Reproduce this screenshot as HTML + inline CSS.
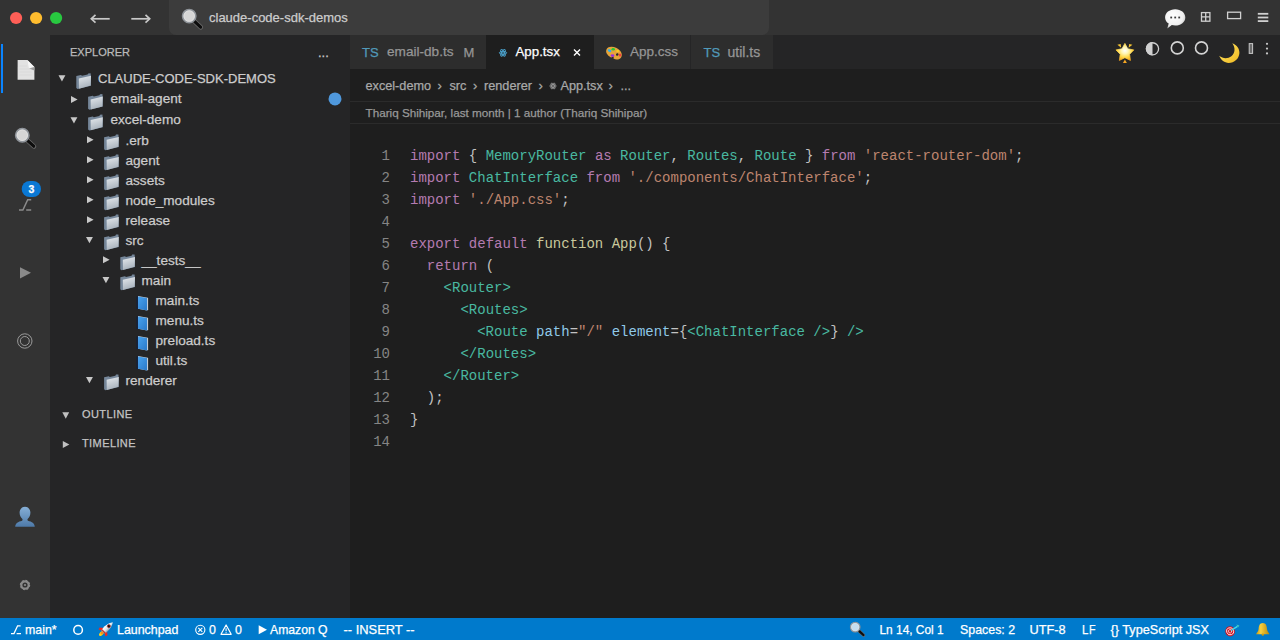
<!DOCTYPE html>
<html><head><meta charset="utf-8">
<style>
*{margin:0;padding:0;box-sizing:border-box}
html,body{width:1280px;height:640px;overflow:hidden;background:#1e1e1e}
body{position:relative;font-family:"Liberation Sans",sans-serif;color:#cccccc}
.a{position:absolute}
.t{position:absolute;white-space:pre;line-height:1;-webkit-text-stroke:0.25px currentColor}
svg{position:absolute;overflow:visible}
.code{position:absolute;left:410px;top:145px;font-family:"Liberation Mono",monospace;font-size:14px;line-height:22px;color:#d4d4d4;white-space:pre;opacity:0.9}
.ln{position:absolute;left:360px;width:30px;top:145px;font-family:"Liberation Mono",monospace;font-size:14px;line-height:22px;color:#858585;text-align:right;white-space:pre}
.k{color:#c586c0}.c{color:#4ec9b0}.s{color:#ce9178}.f{color:#dcdcaa}.v{color:#9cdcfe}
</style></head><body>
<div class="a" style="left:0;top:0;width:1280px;height:35px;background:#333333"></div>
<div class="a" style="left:169px;top:-6px;width:600px;height:40.5px;background:#3c3c3c;border-radius:7px"></div>
<div class="a" style="left:0;top:35px;width:50px;height:583px;background:#333333"></div>
<div class="a" style="left:1px;top:44px;width:2px;height:49px;background:#0a84ff"></div>
<div class="a" style="left:50px;top:35px;width:300px;height:583px;background:#252526"></div>
<div class="a" style="left:350px;top:35px;width:930px;height:34px;background:#252526"></div>
<div class="a" style="left:350px;top:35px;width:136px;height:34px;background:#2d2d2d"></div>
<div class="a" style="left:486px;top:35px;width:108px;height:34px;background:#1e1e1e"></div>
<div class="a" style="left:594px;top:35px;width:96px;height:34px;background:#2d2d2d"></div>
<div class="a" style="left:691px;top:35px;width:82px;height:34px;background:#2d2d2d"></div>
<div class="a" style="left:350px;top:101px;width:930px;height:1px;background:#2b2b2b"></div>
<div class="a" style="left:350px;top:123px;width:930px;height:1px;background:#2b2b2b"></div>
<div class="a" style="left:0;top:618px;width:1280px;height:22px;background:#007acc"></div>
<div class="t" style="left:209px;top:10.90px;font-size:13px;color:#cccccc;">claude-code-sdk-demos</div>
<div class="t" style="left:70px;top:46.99px;font-size:11px;color:#bbbbbb;">EXPLORER</div>
<div class="t" style="left:318px;top:46.10px;font-size:13px;color:#cccccc;">...</div>
<div class="t" style="left:98px;top:72.20px;font-size:13px;color:#cccccc;">CLAUDE-CODE-SDK-DEMOS</div>
<div class="t" style="left:110.5px;top:92.49px;font-size:13.6px;color:#cccccc;">email-agent</div>
<div class="t" style="left:110.5px;top:113.29px;font-size:13.6px;color:#cccccc;">excel-demo</div>
<div class="t" style="left:125.5px;top:133.69px;font-size:13.6px;color:#cccccc;">.erb</div>
<div class="t" style="left:125.5px;top:153.69px;font-size:13.6px;color:#cccccc;">agent</div>
<div class="t" style="left:125.5px;top:173.69px;font-size:13.6px;color:#cccccc;">assets</div>
<div class="t" style="left:125.5px;top:193.69px;font-size:13.6px;color:#cccccc;">node_modules</div>
<div class="t" style="left:125.5px;top:213.69px;font-size:13.6px;color:#cccccc;">release</div>
<div class="t" style="left:125.5px;top:233.69px;font-size:13.6px;color:#cccccc;">src</div>
<div class="t" style="left:141.5px;top:253.69px;font-size:13.6px;color:#cccccc;">__tests__</div>
<div class="t" style="left:141.5px;top:273.69px;font-size:13.6px;color:#cccccc;">main</div>
<div class="t" style="left:155.5px;top:293.69px;font-size:13.6px;color:#cccccc;">main.ts</div>
<div class="t" style="left:155.5px;top:313.69px;font-size:13.6px;color:#cccccc;">menu.ts</div>
<div class="t" style="left:155.5px;top:333.69px;font-size:13.6px;color:#cccccc;">preload.ts</div>
<div class="t" style="left:155.5px;top:353.69px;font-size:13.6px;color:#cccccc;">util.ts</div>
<div class="t" style="left:125.5px;top:373.69px;font-size:13.6px;color:#cccccc;">renderer</div>
<div class="t" style="left:82px;top:409.19px;font-size:11px;color:#c4c4c4;letter-spacing:0.4px">OUTLINE</div>
<div class="t" style="left:82px;top:437.99px;font-size:11px;color:#c4c4c4;letter-spacing:0.4px">TIMELINE</div>
<div class="t" style="left:362px;top:45.50px;font-size:13px;color:#519aba;">TS</div>
<div class="t" style="left:387px;top:44.99px;font-size:13.6px;color:#969696;">email-db.ts</div>
<div class="t" style="left:463.5px;top:45.50px;font-size:13px;color:#969696;">M</div>
<div class="t" style="left:515.5px;top:45.24px;font-size:13.3px;color:#ffffff;">App.tsx</div>
<div class="t" style="left:630px;top:45.07px;font-size:13.5px;color:#969696;">App.css</div>
<div class="t" style="left:703.5px;top:45.50px;font-size:13px;color:#519aba;">TS</div>
<div class="t" style="left:727.5px;top:44.65px;font-size:14px;color:#969696;">util.ts</div>
<div class="t" style="left:365.5px;top:79.75px;font-size:12.7px;color:#a9a9a9;">excel-demo</div>
<div class="t" style="left:449.5px;top:79.75px;font-size:12.7px;color:#a9a9a9;">src</div>
<div class="t" style="left:484px;top:79.75px;font-size:12.7px;color:#a9a9a9;">renderer</div>
<div class="t" style="left:560.5px;top:79.75px;font-size:12.7px;color:#a9a9a9;">App.tsx</div>
<div class="t" style="left:620.5px;top:79.75px;font-size:12.7px;color:#a9a9a9;">...</div>
<div class="t" style="left:437.5px;top:79.00px;font-size:13px;color:#a9a9a9;">›</div>
<div class="t" style="left:473px;top:79.00px;font-size:13px;color:#a9a9a9;">›</div>
<div class="t" style="left:538.5px;top:79.00px;font-size:13px;color:#a9a9a9;">›</div>
<div class="t" style="left:608.5px;top:79.00px;font-size:13px;color:#a9a9a9;">›</div>
<div class="t" style="left:365.5px;top:107.00px;font-size:11.7px;color:#999999;">Thariq Shihipar, last month | 1 author (Thariq Shihipar)</div>
<div class="ln">1
2
3
4
5
6
7
8
9
10
11
12
13
14</div>
<div class="code"><span class="k">import</span> { <span class="c">MemoryRouter</span> <span class="k">as</span> <span class="c">Router</span>, <span class="c">Routes</span>, <span class="c">Route</span> } <span class="k">from</span> <span class="s">'react-router-dom'</span>;
<span class="k">import</span> <span class="c">ChatInterface</span> <span class="k">from</span> <span class="s">'./components/ChatInterface'</span>;
<span class="k">import</span> <span class="s">'./App.css'</span>;

<span class="k">export</span> <span class="k">default</span> <span class="f">function</span> <span class="f">App</span>() {
  <span class="k">return</span> (
    <span class="c">&lt;Router&gt;</span>
      <span class="c">&lt;Routes&gt;</span>
        <span class="c">&lt;Route</span> <span class="v">path</span>=<span class="s">"/"</span> <span class="v">element</span>={<span class="c">&lt;ChatInterface /&gt;</span>} <span class="c">/&gt;</span>
      <span class="c">&lt;/Routes&gt;</span>
    <span class="c">&lt;/Router&gt;</span>
  );
}
</div>
<div class="t" style="left:25px;top:624.20px;font-size:12.4px;color:#ffffff;">main*</div>
<div class="t" style="left:117px;top:624.20px;font-size:12.4px;color:#ffffff;">Launchpad</div>
<div class="t" style="left:209px;top:624.20px;font-size:12.4px;color:#ffffff;">0</div>
<div class="t" style="left:235px;top:624.20px;font-size:12.4px;color:#ffffff;">0</div>
<div class="t" style="left:270px;top:624.37px;font-size:12.2px;color:#ffffff;">Amazon Q</div>
<div class="t" style="left:343.5px;top:623.78px;font-size:12.9px;color:#ffffff;">-- INSERT --</div>
<div class="t" style="left:879.5px;top:624.63px;font-size:11.9px;color:#ffffff;">Ln 14, Col 1</div>
<div class="t" style="left:960px;top:624.20px;font-size:12.4px;color:#ffffff;">Spaces: 2</div>
<div class="t" style="left:1029.5px;top:623.91px;font-size:12.75px;color:#ffffff;">UTF-8</div>
<div class="t" style="left:1082.2px;top:622.80px;font-size:13px;color:#ffffff;transform:scaleX(0.88);transform-origin:0 0">L</div>
<div class="t" style="left:1088.8px;top:622.80px;font-size:13px;color:#ffffff;transform:scaleX(0.82);transform-origin:0 0">F</div>
<div class="t" style="left:1110.5px;top:623.95px;font-size:12.7px;color:#ffffff;">{} TypeScript JSX</div>
<svg style="left:0;top:0" width="1280" height="640" viewBox="0 0 1280 640">
<defs>
<linearGradient id="fg" x1="0" y1="0" x2="0.3" y2="1"><stop offset="0" stop-color="#e6eaee"/><stop offset="1" stop-color="#a9b3bd"/></linearGradient>
<linearGradient id="bg" x1="0" y1="0" x2="1" y2="1"><stop offset="0" stop-color="#4aa3ee"/><stop offset="1" stop-color="#2a78c8"/></linearGradient>
<linearGradient id="pg" x1="0" y1="0" x2="0" y2="1"><stop offset="0" stop-color="#86afd6"/><stop offset="1" stop-color="#4d79a8"/></linearGradient>
<linearGradient id="sg" x1="0" y1="0" x2="0" y2="1"><stop offset="0" stop-color="#fffbe0"/><stop offset="0.45" stop-color="#ffe060"/><stop offset="1" stop-color="#f39c12"/></linearGradient>
<linearGradient id="mg" x1="0" y1="0" x2="1" y2="1"><stop offset="0" stop-color="#ffe868"/><stop offset="1" stop-color="#f0b820"/></linearGradient>
<linearGradient id="bellg" x1="0" y1="0" x2="1" y2="0"><stop offset="0" stop-color="#c89a10"/><stop offset="0.35" stop-color="#f6d040"/><stop offset="1" stop-color="#b8860b"/></linearGradient>
<radialGradient id="sg2" cx="0.5" cy="0.42" r="0.62"><stop offset="0" stop-color="#ffffff"/><stop offset="0.3" stop-color="#fff7b8"/><stop offset="0.65" stop-color="#ffd84a"/><stop offset="1" stop-color="#f2a31b"/></radialGradient>
<linearGradient id="rk" x1="0" y1="0" x2="0" y2="1"><stop offset="0" stop-color="#ffffff"/><stop offset="0.6" stop-color="#dde3e8"/><stop offset="1" stop-color="#8898a8"/></linearGradient>
<radialGradient id="bub" cx="0.4" cy="0.35" r="0.7"><stop offset="0" stop-color="#ffffff"/><stop offset="0.7" stop-color="#f0f0f0"/><stop offset="1" stop-color="#bdbdbd"/></radialGradient>
</defs>
<circle cx="16.1" cy="18" r="6.1" fill="#ff5f57"/><circle cx="36.1" cy="18" r="6.1" fill="#febc2e"/><circle cx="56.1" cy="18" r="6.1" fill="#28c840"/>
<g stroke="#c8c8c8" stroke-width="1.7" fill="none" stroke-linecap="butt"><path d="M91.5,18.8 H109.7"/><path d="M95.5,14.9 L91.3,18.8 L95.5,22.7"/><path d="M131.3,18.8 H149.5"/><path d="M145.5,14.9 L149.7,18.8 L145.5,22.7"/></g>
<g transform="translate(189.2,16.1) scale(1.0)">
<line x1="5.2" y1="5.2" x2="11.6" y2="11.2" stroke="#6b6b6b" stroke-width="4.6" stroke-linecap="round"/>
<line x1="5.6" y1="5.6" x2="11.4" y2="11" stroke="#0d0d0d" stroke-width="3.2" stroke-linecap="round"/>
<circle cx="0" cy="0" r="6.6" fill="#d6d6d6" stroke="#8f949a" stroke-width="1.7"/>
<circle cx="0" cy="0" r="5.3" fill="none" stroke="#e8e8e8" stroke-width="0.6"/>
</g>
<path d="M1175.2,9.2 C1181,9.2 1185.3,12.8 1185.3,17.4 C1185.3,22 1181,25.6 1175.2,25.6 C1174,25.6 1172.8,25.4 1171.8,25.1 L1167.3,28.6 L1168.7,23.6 C1166.4,22.1 1165.1,19.9 1165.1,17.4 C1165.1,12.8 1169.4,9.2 1175.2,9.2 Z" fill="url(#bub)"/>
<g fill="#3a3a3a"><rect x="1170.3" y="16.6" width="1.8" height="1.8"/><rect x="1174.3" y="16.6" width="1.8" height="1.8"/><rect x="1178.3" y="16.6" width="1.8" height="1.8"/></g>
<g fill="none" stroke="#d0d0d0" stroke-width="1.3"><rect x="1201.5" y="12.6" width="8.4" height="8.6"/><path d="M1205.7,12.6 V21.2 M1201.5,16.9 H1209.9"/><rect x="1227.6" y="12.2" width="13" height="6.4"/></g>
<g fill="#d0d0d0"><rect x="1257.8" y="12.9" width="10.5" height="1.8"/><rect x="1257.8" y="16.6" width="10.5" height="1.8"/><rect x="1257.8" y="20.2" width="10.5" height="1.8"/></g>
<path d="M17.6,60 H27.4 L34.4,67 V79.8 H17.6 Z" fill="#e2e2e2"/><path d="M27.4,60 L34.4,67 L29,68.6 Z" fill="#f6f6f6"/><path d="M29,68.6 L34.4,67 L34.4,70.5 Z" fill="#9c9c9c"/>
<g stroke="#d0d0d0" stroke-width="0.5"><path d="M19.5,66 H27 M19.5,69 H31.5 M19.5,72 H31.5 M19.5,75 H31.5"/></g>
<g transform="translate(22.3,135.2) scale(1.0)">
<line x1="5.2" y1="5.2" x2="11.6" y2="11.2" stroke="#6b6b6b" stroke-width="4.6" stroke-linecap="round"/>
<line x1="5.6" y1="5.6" x2="11.4" y2="11" stroke="#0d0d0d" stroke-width="3.2" stroke-linecap="round"/>
<circle cx="0" cy="0" r="6.6" fill="#d6d6d6" stroke="#8f949a" stroke-width="1.7"/>
<circle cx="0" cy="0" r="5.3" fill="none" stroke="#e8e8e8" stroke-width="0.6"/>
</g>
<rect x="21.7" y="181" width="19.3" height="16" rx="8" fill="#0a78d4"/>
<g fill="none" stroke="#8c8c8c" stroke-width="1.5"><path d="M19,210.1 H22.9 L27.7,199.75 H31.2 M26.2,210.1 H31.2"/></g>
<path d="M20,267.2 L31,272.8 L20,278.4 Z" fill="#8a8a8a"/>
<g fill="none" stroke="#9a9a9a" stroke-width="1"><circle cx="24.8" cy="341" r="7.2"/><circle cx="24.8" cy="341" r="4.5"/></g>
<path d="M15.2,526.8 C15.5,523.3 18,521.8 22.2,520.8 L22.6,519.2 C20.6,517.8 19.6,515.3 19.6,512.6 C19.6,509.2 22,506.8 25,506.8 C28,506.8 30.4,509.2 30.4,512.6 C30.4,515.3 29.4,517.8 27.4,519.2 L27.8,520.8 C32,521.8 34.5,523.3 34.8,526.8 Z" fill="url(#pg)"/>
<g transform="translate(25,585)"><circle r="3.7" fill="none" stroke="#8a8a8a" stroke-width="2.2"/><circle r="4.4" fill="none" stroke="#8a8a8a" stroke-width="1.6" stroke-dasharray="1.75 1.7"/><circle r="1.1" fill="#8a8a8a"/></g>
<path d="M58.5,75.2 L65.4,75.2 L61.95,81.60000000000001 Z" fill="#c8c8c8"/>
<g transform="translate(76,73.2)">
<path d="M0.3,2.8 L5,1.8 L6,2.6 L11.6,1.3 L12.2,0.2 L14.6,0 L15,4.5 L15,12.6 L1.6,15.8 L0.3,14.8 Z" fill="#76879a"/>
<path d="M2.8,5.4 L15,2.6 L14.6,12.4 L3,15.6 Z" fill="url(#fg)"/>
</g>
<path d="M71,96 L77.6,99.5 L71,103 Z" fill="#c8c8c8"/>
<g transform="translate(87.8,94)">
<path d="M0.3,2.8 L5,1.8 L6,2.6 L11.6,1.3 L12.2,0.2 L14.6,0 L15,4.5 L15,12.6 L1.6,15.8 L0.3,14.8 Z" fill="#76879a"/>
<path d="M2.8,5.4 L15,2.6 L14.6,12.4 L3,15.6 Z" fill="url(#fg)"/>
</g>
<circle cx="335" cy="98.9" r="6.5" fill="#4f98dc"/>
<path d="M70.5,117.2 L77.4,117.2 L73.95,123.60000000000001 Z" fill="#c8c8c8"/>
<g transform="translate(87.8,114.6)">
<path d="M0.3,2.8 L5,1.8 L6,2.6 L11.6,1.3 L12.2,0.2 L14.6,0 L15,4.5 L15,12.6 L1.6,15.8 L0.3,14.8 Z" fill="#76879a"/>
<path d="M2.8,5.4 L15,2.6 L14.6,12.4 L3,15.6 Z" fill="url(#fg)"/>
</g>
<path d="M87,136.2 L93.6,139.7 L87,143.2 Z" fill="#c8c8c8"/>
<g transform="translate(103.8,134.39999999999998)">
<path d="M0.3,2.8 L5,1.8 L6,2.6 L11.6,1.3 L12.2,0.2 L14.6,0 L15,4.5 L15,12.6 L1.6,15.8 L0.3,14.8 Z" fill="#76879a"/>
<path d="M2.8,5.4 L15,2.6 L14.6,12.4 L3,15.6 Z" fill="url(#fg)"/>
</g>
<path d="M87,156.2 L93.6,159.7 L87,163.2 Z" fill="#c8c8c8"/>
<g transform="translate(103.8,154.39999999999998)">
<path d="M0.3,2.8 L5,1.8 L6,2.6 L11.6,1.3 L12.2,0.2 L14.6,0 L15,4.5 L15,12.6 L1.6,15.8 L0.3,14.8 Z" fill="#76879a"/>
<path d="M2.8,5.4 L15,2.6 L14.6,12.4 L3,15.6 Z" fill="url(#fg)"/>
</g>
<path d="M87,176.2 L93.6,179.7 L87,183.2 Z" fill="#c8c8c8"/>
<g transform="translate(103.8,174.39999999999998)">
<path d="M0.3,2.8 L5,1.8 L6,2.6 L11.6,1.3 L12.2,0.2 L14.6,0 L15,4.5 L15,12.6 L1.6,15.8 L0.3,14.8 Z" fill="#76879a"/>
<path d="M2.8,5.4 L15,2.6 L14.6,12.4 L3,15.6 Z" fill="url(#fg)"/>
</g>
<path d="M87,196.2 L93.6,199.7 L87,203.2 Z" fill="#c8c8c8"/>
<g transform="translate(103.8,194.39999999999998)">
<path d="M0.3,2.8 L5,1.8 L6,2.6 L11.6,1.3 L12.2,0.2 L14.6,0 L15,4.5 L15,12.6 L1.6,15.8 L0.3,14.8 Z" fill="#76879a"/>
<path d="M2.8,5.4 L15,2.6 L14.6,12.4 L3,15.6 Z" fill="url(#fg)"/>
</g>
<path d="M87,216.2 L93.6,219.7 L87,223.2 Z" fill="#c8c8c8"/>
<g transform="translate(103.8,214.39999999999998)">
<path d="M0.3,2.8 L5,1.8 L6,2.6 L11.6,1.3 L12.2,0.2 L14.6,0 L15,4.5 L15,12.6 L1.6,15.8 L0.3,14.8 Z" fill="#76879a"/>
<path d="M2.8,5.4 L15,2.6 L14.6,12.4 L3,15.6 Z" fill="url(#fg)"/>
</g>
<path d="M86,236.89999999999998 L92.9,236.89999999999998 L89.45,243.29999999999998 Z" fill="#c8c8c8"/>
<g transform="translate(103.8,234.39999999999998)">
<path d="M0.3,2.8 L5,1.8 L6,2.6 L11.6,1.3 L12.2,0.2 L14.6,0 L15,4.5 L15,12.6 L1.6,15.8 L0.3,14.8 Z" fill="#76879a"/>
<path d="M2.8,5.4 L15,2.6 L14.6,12.4 L3,15.6 Z" fill="url(#fg)"/>
</g>
<path d="M103,256.2 L109.6,259.7 L103,263.2 Z" fill="#c8c8c8"/>
<g transform="translate(120,254.39999999999998)">
<path d="M0.3,2.8 L5,1.8 L6,2.6 L11.6,1.3 L12.2,0.2 L14.6,0 L15,4.5 L15,12.6 L1.6,15.8 L0.3,14.8 Z" fill="#76879a"/>
<path d="M2.8,5.4 L15,2.6 L14.6,12.4 L3,15.6 Z" fill="url(#fg)"/>
</g>
<path d="M102.5,276.9 L109.4,276.9 L105.95,283.29999999999995 Z" fill="#c8c8c8"/>
<g transform="translate(120,274.4)">
<path d="M0.3,2.8 L5,1.8 L6,2.6 L11.6,1.3 L12.2,0.2 L14.6,0 L15,4.5 L15,12.6 L1.6,15.8 L0.3,14.8 Z" fill="#76879a"/>
<path d="M2.8,5.4 L15,2.6 L14.6,12.4 L3,15.6 Z" fill="url(#fg)"/>
</g>
<g transform="translate(136,295.09999999999997)">
<path d="M0.4,1.6 L2,1 L2,13.6 L0.4,14.4 Z" fill="#16223a"/>
<path d="M2,1 L11.8,2.6 L12.1,3 L12.1,14.8 L11,15.3 L2,13.6 Z" fill="#c3ccd6"/>
<path d="M2,1.3 L11,3 L11,15.3 L2,13.6 Z" fill="url(#bg)"/>
</g>
<g transform="translate(136,315.09999999999997)">
<path d="M0.4,1.6 L2,1 L2,13.6 L0.4,14.4 Z" fill="#16223a"/>
<path d="M2,1 L11.8,2.6 L12.1,3 L12.1,14.8 L11,15.3 L2,13.6 Z" fill="#c3ccd6"/>
<path d="M2,1.3 L11,3 L11,15.3 L2,13.6 Z" fill="url(#bg)"/>
</g>
<g transform="translate(136,335.09999999999997)">
<path d="M0.4,1.6 L2,1 L2,13.6 L0.4,14.4 Z" fill="#16223a"/>
<path d="M2,1 L11.8,2.6 L12.1,3 L12.1,14.8 L11,15.3 L2,13.6 Z" fill="#c3ccd6"/>
<path d="M2,1.3 L11,3 L11,15.3 L2,13.6 Z" fill="url(#bg)"/>
</g>
<g transform="translate(136,355.09999999999997)">
<path d="M0.4,1.6 L2,1 L2,13.6 L0.4,14.4 Z" fill="#16223a"/>
<path d="M2,1 L11.8,2.6 L12.1,3 L12.1,14.8 L11,15.3 L2,13.6 Z" fill="#c3ccd6"/>
<path d="M2,1.3 L11,3 L11,15.3 L2,13.6 Z" fill="url(#bg)"/>
</g>
<path d="M86,376.9 L92.9,376.9 L89.45,383.29999999999995 Z" fill="#c8c8c8"/>
<g transform="translate(103.8,374.4)">
<path d="M0.3,2.8 L5,1.8 L6,2.6 L11.6,1.3 L12.2,0.2 L14.6,0 L15,4.5 L15,12.6 L1.6,15.8 L0.3,14.8 Z" fill="#76879a"/>
<path d="M2.8,5.4 L15,2.6 L14.6,12.4 L3,15.6 Z" fill="url(#fg)"/>
</g>
<path d="M62.3,412.3 L69.2,412.3 L65.75,418.7 Z" fill="#c0c0c0"/>
<path d="M62.8,441.1 L69.39999999999999,444.6 L62.8,448.1 Z" fill="#c0c0c0"/>
<g transform="translate(503,52.8) scale(0.88)" fill="none" stroke="#4a9fc8" stroke-width="1.1">
<ellipse rx="4.2" ry="1.7"/><ellipse rx="4.2" ry="1.7" transform="rotate(60)"/><ellipse rx="4.2" ry="1.7" transform="rotate(120)"/>
<circle r="0.9" fill="#4a9fc8" stroke="none"/></g>
<g stroke="#ffffff" stroke-width="1.4"><path d="M574,49.6 L580,55.6 M580,49.6 L574,55.6"/></g>
<g transform="translate(614,53) rotate(28)"><path d="M-8.3,0 C-8.3,-3.4 -4.5,-5.6 0,-5.6 C4.8,-5.6 8.3,-3.2 8.3,0 C8.3,3.6 5,5.4 2.2,5.2 L1.5,3.2 L-0.5,5.4 C-5,5.4 -8.3,3.4 -8.3,0 Z" fill="#e6a43a"/><circle cx="3.6" cy="-0.2" r="1.3" fill="#2a2a2a"/></g>
<ellipse cx="609.6" cy="50.6" rx="1.9" ry="1.3" fill="#2ab0f0" transform="rotate(30 609.6 50.6)"/><ellipse cx="613.2" cy="49.3" rx="1.7" ry="1.3" fill="#22c83a"/><ellipse cx="617.6" cy="51" rx="1.5" ry="1.1" fill="#f8d020"/><ellipse cx="620" cy="55" rx="1.3" ry="1.5" fill="#f04040"/><ellipse cx="612.5" cy="55.6" rx="1.8" ry="1.3" fill="#9a30e0"/>
<g transform="translate(553,86) scale(0.78)" fill="none" stroke="#9a9a9a" stroke-width="1.0">
<ellipse rx="4.2" ry="1.7"/><ellipse rx="4.2" ry="1.7" transform="rotate(60)"/><ellipse rx="4.2" ry="1.7" transform="rotate(120)"/>
<circle r="0.9" fill="#9a9a9a" stroke="none"/></g>
<polygon points="1124.90,43.40 1127.78,48.84 1133.84,49.90 1129.56,54.31 1130.43,60.40 1124.90,57.70 1119.37,60.40 1120.24,54.31 1115.96,49.90 1122.02,48.84" fill="url(#sg2)" stroke="url(#sg2)" stroke-width="0.8" stroke-linejoin="round"/>
<g fill="#f7c531"><path d="M1117.4,44.8 L1120.6,44 L1121.2,47.8 Z"/><path d="M1132.4,44.8 L1129.2,44 L1128.6,47.8 Z"/><path d="M1124.9,59.6 L1126.9,63 L1122.9,63 Z" fill="#f5a623"/></g>
<circle cx="1152.5" cy="48.85" r="6.1" fill="none" stroke="#d0d0d0" stroke-width="1.3"/><path d="M1152.5,42.1 A6.75,6.75 0 0 0 1152.5,55.6 Z" fill="#d0d0d0"/>
<g fill="none" stroke="#d4d4d4" stroke-width="1.6"><circle cx="1177.3" cy="47.9" r="6"/><circle cx="1201.5" cy="47.9" r="6"/></g>
<path d="M1232.3,43.2 C1237,45 1239.6,48.8 1239.4,53 C1239.1,58.8 1234.4,62.9 1228.6,62.9 C1224.6,62.9 1221,60.2 1219.2,55.8 C1222.8,58.8 1227.8,59 1231.4,56.2 C1235.2,53.2 1235.6,47.4 1232.3,43.2 Z" fill="url(#mg)"/>
<rect x="1249.2" y="43.6" width="3.4" height="9.8" fill="#6a6a6a" stroke="#c8c8c8" stroke-width="1"/>
<g fill="#c8c8c8"><circle cx="1267" cy="43.8" r="1.1"/><circle cx="1267" cy="48.6" r="1.1"/><circle cx="1267" cy="53.4" r="1.1"/></g>
<g fill="none" stroke="#ffffff" stroke-width="1.3"><path d="M11,633.6 H14 L17.6,625.8 H20.6 M16.6,633.6 H21"/></g>
<circle cx="78.1" cy="629.9" r="4.3" fill="none" stroke="#ffffff" stroke-width="1.5"/>
<g transform="translate(106,629) rotate(-45)"><ellipse cx="-6.6" cy="0" rx="2.8" ry="1.7" fill="#ffd21a"/><ellipse cx="-5.6" cy="0" rx="1.6" ry="1.2" fill="#ff8a1a"/><path d="M-0.8,-2.3 L-3.4,-5.6 L-5.6,-5 L-4,-2 Z" fill="#f0281e"/><path d="M-0.8,2.3 L-3.4,5.6 L-5.6,5 L-4,2 Z" fill="#f0281e"/><path d="M-4,-2.3 C0,-3.4 5.5,-3 9.6,0 C5.5,3 0,3.4 -4,2.3 Z" fill="url(#rk)"/><path d="M-4,-2.2 L-4,2.2 L-2.8,2.5 L-2.8,-2.5 Z" fill="#c83030"/><circle cx="4" cy="0" r="1.55" fill="#141414" stroke="#b83a3a" stroke-width="0.7"/></g>
<g fill="none" stroke="#ffffff" stroke-width="1.1"><circle cx="200.3" cy="629.8" r="4.6"/><path d="M198.3,627.8 L202.3,631.8 M202.3,627.8 L198.3,631.8"/></g>
<path d="M226.1,625 L231.2,634.3 H221 Z" fill="none" stroke="#ffffff" stroke-width="1.2" stroke-linejoin="round"/><path d="M226.1,628.2 V631.2 M226.1,632.2 V633.2" stroke="#ffffff" stroke-width="1.1"/>
<path d="M258.7,625.3 L267,629.8 L258.7,634.3 Z" fill="#ffffff"/>
<g transform="translate(855.2,627.1) scale(0.72)">
<line x1="5.2" y1="5.2" x2="11.6" y2="11.2" stroke="#6b6b6b" stroke-width="4.6" stroke-linecap="round"/>
<line x1="5.6" y1="5.6" x2="11.4" y2="11" stroke="#0d0d0d" stroke-width="3.2" stroke-linecap="round"/>
<circle cx="0" cy="0" r="6.6" fill="#c6ddef" stroke="#8f949a" stroke-width="1.7"/>
<circle cx="0" cy="0" r="5.3" fill="none" stroke="#e8e8e8" stroke-width="0.6"/>
</g>
<g transform="translate(1230.1,631.3) rotate(-20)"><ellipse rx="4.8" ry="5" fill="#d0101e"/><ellipse rx="3.4" ry="3.6" fill="none" stroke="#ffffff" stroke-width="0.8"/><ellipse rx="1.6" ry="1.7" fill="none" stroke="#ffffff" stroke-width="0.7"/></g>
<path d="M1231,630.5 L1237.5,626.4" stroke="#40e0f0" stroke-width="1.4"/><path d="M1236.4,624.6 L1239.4,625.4 L1238,627.4 Z" fill="#40c8c0"/>
<path d="M1262.8,623.1 C1259.6,623.1 1258.8,626 1258.6,629 C1258.4,631.6 1256.6,632.4 1256.1,634.2 L1269.4,634.2 C1269,632.4 1267.2,631.6 1267,629 C1266.8,626 1266,623.1 1262.8,623.1 Z" fill="url(#bellg)"/><circle cx="1262.8" cy="634.6" r="1.2" fill="#c89a10"/>
</svg>
<div class="t" style="left:21.7px;top:183.6px;width:19.3px;text-align:center;font-size:10.5px;font-weight:bold;color:#ffffff">3</div></body></html>
